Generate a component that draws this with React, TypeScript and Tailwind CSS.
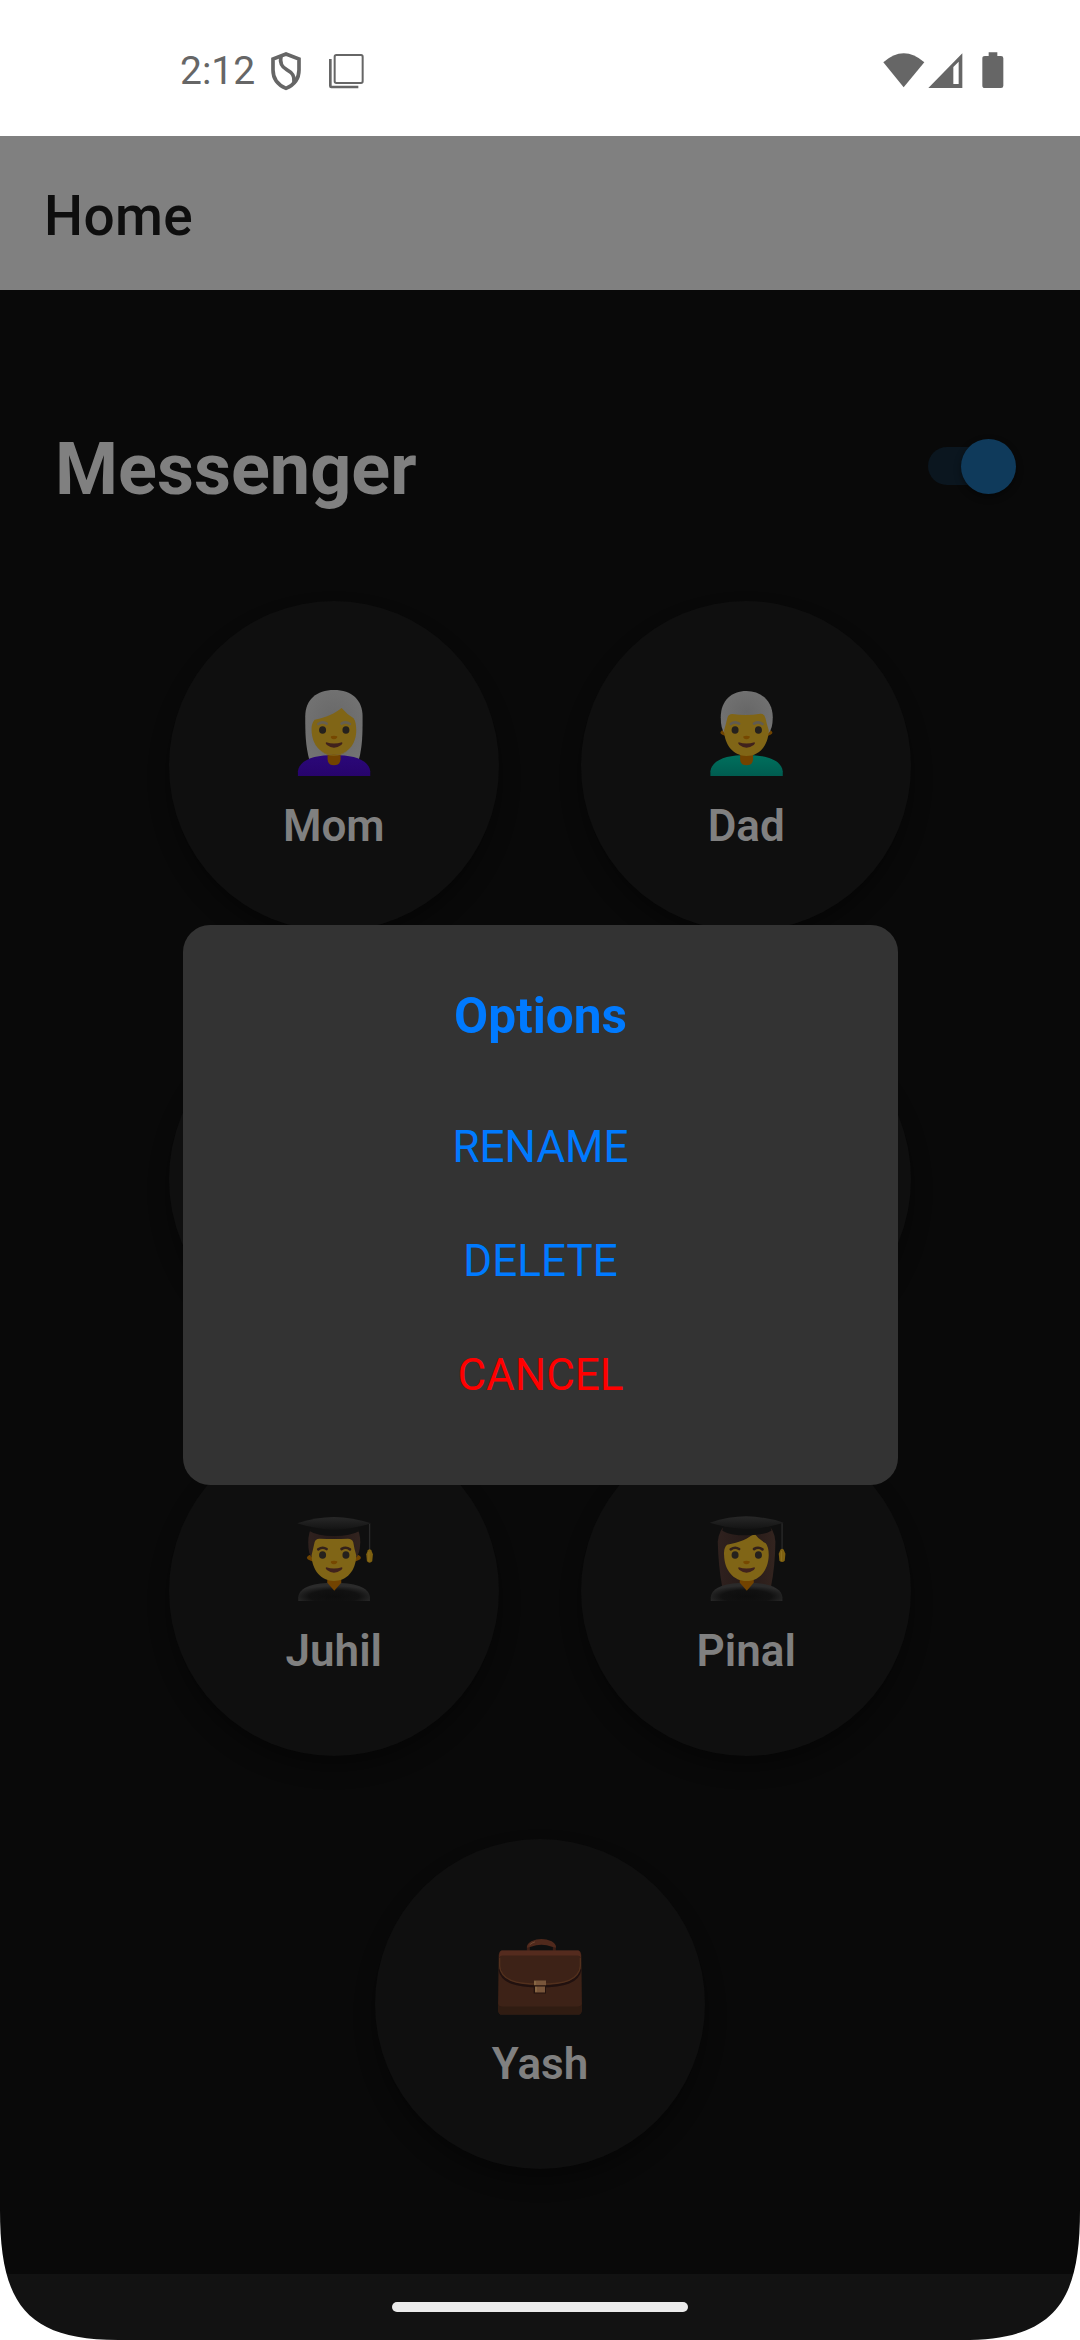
import React from "react";

function StatusBar() {
  return (
    <div className="flex h-[136px] items-start bg-white text-[#666666]">
      <div className="ml-[180px] mt-[48px] text-[39px] leading-[46px]">2:12</div>
      <svg className="ml-[15px] mt-[52px]" width="32" height="39" viewBox="0 0 96 117">
        <path d="M48 6 L87 21 V54 C87 82 72 99 48 109 C24 99 9 82 9 54 V21 Z" fill="none" stroke="#666" strokeWidth="11" />
        <path d="M33 12 C29 31 33 44 50 53 C68 63 74 72 72 91" fill="none" stroke="#666" strokeWidth="11" />
      </svg>
      <svg className="ml-[26px] mt-[52px]" width="38" height="38" viewBox="0 0 114 114">
        <rect x="20" y="9" width="84" height="84" rx="5" fill="none" stroke="#666" strokeWidth="6" />
        <path d="M7 21 V102 Q7 105 10 105 H91" fill="none" stroke="#666" strokeWidth="8" />
      </svg>
      <svg className="ml-auto mr-[75px] mt-[50px]" width="122" height="40" viewBox="0 0 366 120" fill="#666">
        <path d="M1 37 Q62 -17 124 37 L62 112 Z" />
        <path fillRule="evenodd" d="M136 114 L238 10 V114 Z M211 51 V102 H227 V35 Z" />
        <path d="M317 7 H343 V18 H354 Q361 18 361 25 V107 Q361 114 354 114 H306 Q298 114 298 107 V25 Q298 18 306 18 H317 Z" />
      </svg>
    </div>
  );
}

function Brows({ color, y = 0 }: { color: string; y?: number }) {
  return (
    <g transform={`translate(0 ${y})`}>
      <path d="M144 162 Q157 153 169 161" fill="none" stroke={color} strokeWidth="8" strokeLinecap="round" />
      <path d="M214 161 Q227 153 239 162" fill="none" stroke={color} strokeWidth="8" strokeLinecap="round" />
    </g>
  );
}

function Features({ y = 0 }: { y?: number }) {
  return (
    <g transform={`translate(0 ${y})`}>
      <ellipse cx="157" cy="180" rx="10.5" ry="11.5" fill="#25211d" />
      <ellipse cx="227" cy="180" rx="10.5" ry="11.5" fill="#25211d" />
      <path d="M182 199 Q191 196 201 199 Q202 207 191 208 Q180 207 182 199" fill="#764800" />
      <path d="M168 217 Q191 224 215 217 Q219 219 213 225 Q191 241 170 225 Q164 219 168 217" fill="#40221c" />
    </g>
  );
}

function Cap() {
  return (
    <g>
      <path d="M121 111 L119 124 Q141 138 191 138 Q242 138 266 124 L263 111 Z" fill="#101010" />
      <path d="M81 100 Q139 81 191 81 Q247 82 303 100 Q241 119 191 119 Q139 118 81 100" fill="url(#cap)" />
      <path d="M298 102 V181" stroke="#2a2a2a" strokeWidth="4" />
      <path d="M293 181 Q298 175 303 181 L308 193 L306 214 Q298 222 290 214 L288 193 Z" fill="#7e6010" />
      <path d="M296 185 V215" stroke="#8d6e20" strokeWidth="3" />
    </g>
  );
}

function Defs() {
  return (
    <svg className="absolute h-0 w-0" aria-hidden="true">
      <defs>
        <linearGradient id="purple" x2="0" y2="1"><stop stopColor="#2b0879" /><stop offset="1" stopColor="#27046c" /></linearGradient>
        <linearGradient id="teal" x2="0" y2="1"><stop stopColor="#00705d" /><stop offset="1" stopColor="#005c50" /></linearGradient>
        <linearGradient id="cap" x2="0" y2="1"><stop stopColor="#282828" /><stop offset="1" stopColor="#131313" /></linearGradient>
        <radialGradient id="gown" cx=".5" cy=".75" r=".58"><stop stopColor="#0d0d0d" /><stop offset=".6" stopColor="#111111" /><stop offset="1" stopColor="#2b2b2b" /></radialGradient>
        <radialGradient id="gray" cx=".5" cy=".5" r=".65"><stop stopColor="#676767" /><stop offset="1" stopColor="#747474" /></radialGradient>
        <linearGradient id="brown"><stop stopColor="#2f211e" /><stop offset=".5" stopColor="#261a18" /><stop offset="1" stopColor="#33241f" /></linearGradient>
      </defs>
    </svg>
  );
}

const GOWN = "M84 333 V322 C86 290 134 278 191 278 C249 278 297 290 299 322 V333 Z";
const SHIRT = "M83 318 V304 C87 269 134 255 191 255 C249 255 296 269 300 304 V318 Z";

function Mom() {
  return (
    <svg width="130" height="130" viewBox="-3.75 0 390 390">
      <path d="M118 272 C105 227 105 187 105 139 C105 89 139 60 191 60 C245 60 277 90 277 140 C277 188 277 229 265 272 Z" fill="url(#gray)" />
      <path d="M124 181 C123 168 126 157 133 149 C172 142 196 129 214 114 Q229 132 250 145 C256 153 258 167 258 181 C258 227 229 255 191 255 C153 255 125 226 124 181" fill="#806516" />
      <path d={SHIRT} fill="url(#purple)" />
      <path d="M172 254 H211 V268 Q210 286 191 286 Q172 285 172 268 Z" fill="#724300" />
      <path d="M150 242 Q191 268 233 242 Q214 257 191 257 Q168 257 150 242" fill="#806516" />
      <Brows color="#665f50" />
      <Features />
    </svg>
  );
}

function Dad() {
  return (
    <svg width="130" height="130" viewBox="3.75 0 390 390">
      <g transform="translate(9 0)">
        <ellipse cx="191" cy="188" rx="78" ry="17" fill="#704400" />
        <path d="M126 190 Q114 178 114 142 C114 91 147 63 191 63 C236 63 270 93 270 142 Q270 177 257 190 Z" fill="url(#gray)" />
        <path d={SHIRT} fill="url(#teal)" />
        <path d="M172 252 H211 V268 Q210 286 191 286 Q172 285 172 268 Z" fill="#724300" />
        <path d="M124 181 Q130 160 134 143 Q137 132 149 132 Q191 139 233 131 Q245 131 248 144 Q252 163 258 181 C257 228 229 258 191 258 C153 258 125 226 124 181" fill="#806516" />
        <Brows color="#615b50" />
        <Features />
      </g>
    </svg>
  );
}

function Juhil() {
  return (
    <svg width="130" height="130" viewBox="-3.75 15 390 390">
      <ellipse cx="191" cy="203" rx="81" ry="18" fill="#704400" />
      <path d="M126 204 Q114 195 114 157 Q114 128 127 106 H257 Q270 128 270 157 Q269 193 257 204 Z" fill="url(#brown)" />
      <path d={GOWN} fill="url(#gown)" />
      <path d="M171 268 H213 V278 L192 302 L171 278 Z" fill="#724300" />
      <path d="M124 196 Q129 175 133 157 Q136 145 149 146 Q191 148 233 146 Q246 146 249 157 Q252 177 258 196 C257 244 229 273 191 273 C153 273 125 241 124 196" fill="#806516" />
      <Brows color="#33211a" y={16} />
      <Features y={15} />
      <Cap />
    </svg>
  );
}

function Pinal() {
  return (
    <svg width="130" height="130" viewBox="3.75 15 390 390">
      <g transform="translate(9 0)">
        <path d="M118 288 Q107 230 105 155 Q109 118 130 105 H254 Q275 118 278 155 Q277 229 265 288 Z" fill="url(#brown)" />
        <path d={GOWN} fill="url(#gown)" />
        <path d="M171 268 H213 V278 L192 302 L171 278 Z" fill="#724300" />
        <path d="M124 195 Q122 174 133 164 C171 158 197 146 214 130 Q228 149 249 160 Q258 171 258 195 C257 243 229 273 191 273 C153 273 125 242 124 195" fill="#806516" />
        <Brows color="#33211a" y={16} />
        <Features y={15} />
        <g transform="translate(0 -2)"><Cap /></g>
      </g>
    </svg>
  );
}

function Briefcase() {
  return (
    <svg width="130" height="130" viewBox="-15 -37.5 390 390">
      <path d="M145 94 V79 Q147 65 184 64 Q221 65 223 79 V94" fill="none" stroke="#391d15" strokeWidth="9" />
      <path d="M141 82 Q140 70 154 62 Q184 49 215 62 Q229 70 228 82 L216 79 Q184 66 153 79 Z" fill="#50291c" />
      <path d="M149 73 Q155 67 165 64" stroke="#704832" strokeWidth="3" fill="none" />
      <path d="M65 90 H295 Q303 92 304 105 L306 267 Q304 281 298 282 H61 Q55 279 54 267 L56 105 Q57 92 65 90" fill="#3d2217" />
      <path d="M54 250 Q56 258 68 258 H292 Q304 258 306 250 V267 Q304 281 298 282 H61 Q55 279 54 267 Z" fill="#301c12" />
      <path d="M65 90 H295 Q303 92 303 112 Q300 105 292 105 H68 Q60 105 57 112 Q57 92 65 90" fill="#542b1e" />
      <path d="M59 146 C66 185 108 196 180 197 C252 196 294 185 301 146" fill="none" stroke="#21110f" strokeWidth="8" />
      <path d="M59 112 V137 C63 178 105 191 180 191 C255 191 297 178 301 137 V112" fill="none" stroke="#52301d" strokeWidth="4" />
      <rect x="161" y="192" width="37" height="27" fill="#24130e" />
      <path d="M162 180 H198 V194 H162 Z M165 198 H195 V216 H165 Z" fill="#79563b" />
      <path d="M165 182 V193 M168 199 V214" stroke="#96794f" strokeWidth="3" />
    </svg>
  );
}

function Contact({ name, children }: { name?: string; children?: React.ReactNode }) {
  return (
    <div className="flex h-[330px] w-[330px] flex-col items-center rounded-full bg-[#0f0f0f] pt-[69px] shadow-[0_12px_20px_rgba(0,0,0,0.35)]">
      {children}
      {name && <div className="text-[44px] font-semibold leading-[52px] text-[#808080]">{name}</div>}
    </div>
  );
}

function OptionsDialog() {
  return (
    <div className="absolute left-[183px] top-[925px] flex h-[560px] w-[715px] flex-col items-center rounded-[27px] bg-[#333333] pt-[62px]">
      <h2 className="text-[49.5px] font-bold leading-[58px] text-[#007aff]">Options</h2>
      <div className="mt-[45px] flex flex-col items-center text-[44px] leading-[114px] text-[#007aff]">
        <button>RENAME</button>
        <button>DELETE</button>
        <button className="text-[#ff0000]">CANCEL</button>
      </div>
    </div>
  );
}

export default function App() {
  return (
    <div className="relative flex h-[2340px] w-[1080px] flex-col overflow-hidden bg-[#090909] font-['Roboto',sans-serif]">
      <Defs />
      <StatusBar />
      <header className="flex h-[154px] items-center bg-[#808080] pl-[44px] pt-[6px] text-[55px] font-medium leading-[64px] tracking-[0.4px] text-[#0e0e0e]">
        Home
      </header>
      <div className="flex h-[311px] items-start justify-between pl-[55px] pr-[64px] pt-[136px]">
        <h1 className="mt-[2px] text-[72px] font-bold leading-[84px] text-[#808080]">Messenger</h1>
        <div className="mt-[12px] flex h-[56px] w-[88px] items-center">
          <div className="h-[38px] w-[70px] shrink-0 rounded-full bg-[#0b161f]" />
          <div className="-ml-[37px] h-[55px] w-[55px] shrink-0 rounded-full bg-[#0f3a5b] shadow-[0_3px_7px_rgba(0,0,0,0.4)]" />
        </div>
      </div>
      <main className="flex w-full flex-wrap justify-center gap-[82.5px] px-[160px]">
        <Contact name="Mom"><Mom /></Contact>
        <Contact name="Dad"><Dad /></Contact>
        <Contact />
        <Contact />
        <Contact name="Juhil"><Juhil /></Contact>
        <Contact name="Pinal"><Pinal /></Contact>
        <Contact name="Yash"><Briefcase /></Contact>
      </main>
      <div className="mt-auto flex h-[66px] shrink-0 justify-center bg-[#121212] pt-[28px]">
        <div className="h-[10px] w-[296px] rounded-full bg-[#ebebeb]" />
      </div>
      <OptionsDialog />
      <svg className="absolute bottom-0 left-0" width="118" height="130" viewBox="0 0 118 130">
        <path d="M0 0 C0 92 25 130 118 130 H0 Z" fill="white" />
      </svg>
      <svg className="absolute bottom-0 right-0 -scale-x-100" width="118" height="130" viewBox="0 0 118 130">
        <path d="M0 0 C0 92 25 130 118 130 H0 Z" fill="white" />
      </svg>
    </div>
  );
}
